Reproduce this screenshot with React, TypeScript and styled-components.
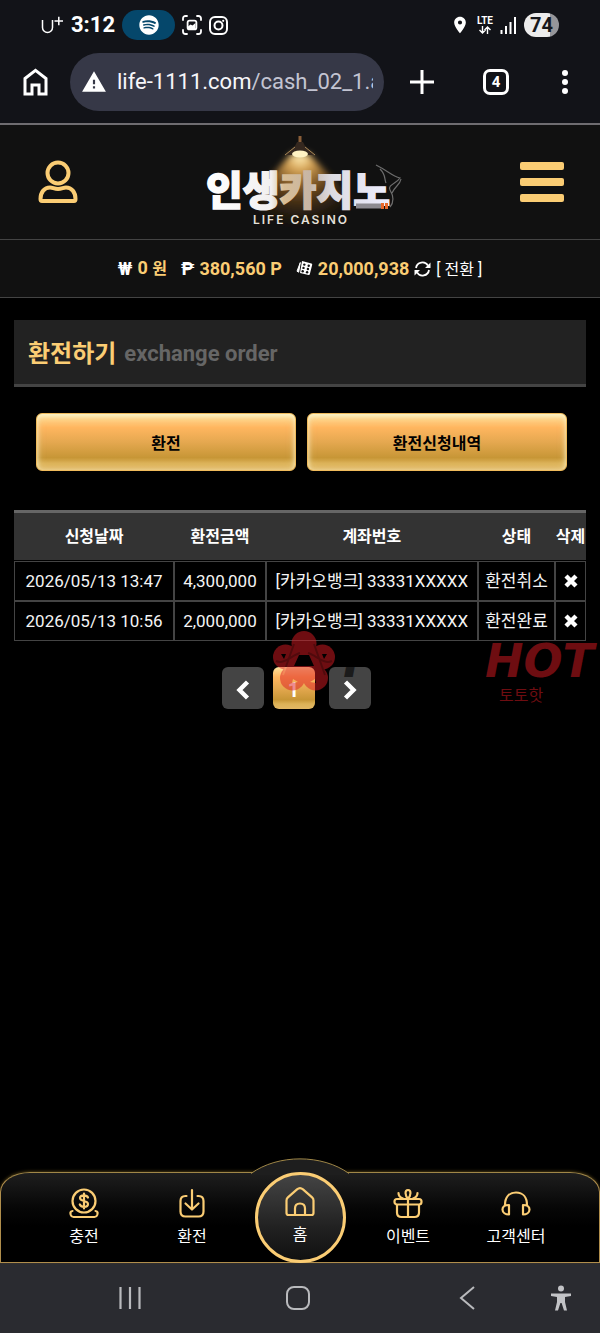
import React from "react";
import styled, { createGlobalStyle } from "styled-components";
import { FaSpotify } from "react-icons/fa";
import { MdLocationOn, MdWarning } from "react-icons/md";

const GOLD = "#fbcd74";

const GlobalStyle = createGlobalStyle`
  *, *::before, *::after { box-sizing: border-box; }
  body {
    margin: 0;
    background: #000;
    color: #fff;
    font-family: Roboto, "Noto Sans CJK KR", sans-serif;
    font-size: 16px;
  }
  button { font: inherit; color: inherit; border: 0; padding: 0; background: none; cursor: pointer; }
  a { color: inherit; text-decoration: none; }
  svg { display: block; flex: none; }
`;

const Screen = styled.div`
  min-height: 100vh;
  display: flex;
  flex-direction: column;
`;

/* ---------- phone status bar and browser toolbar ---------- */

const Chrome = styled.div`
  background: #121318;
  border-bottom: 2px solid #6f6d71;
`;

const StatusBar = styled.div`
  height: 50px;
  padding: 0 41px;
  display: flex;
  align-items: center;
  justify-content: space-between;
`;

const StatusGroup = styled.div<{ $gap: number }>`
  display: flex;
  align-items: center;
  gap: ${(p) => p.$gap}px;
`;

const Clock = styled.span`
  font-size: 22px;
  font-weight: 700;
  line-height: 30px;
`;

const MediaPill = styled.span`
  width: 53px;
  height: 30px;
  border-radius: 15px;
  background: #05476b;
  display: flex;
  align-items: center;
  justify-content: center;
`;

const Network = styled.span`
  display: flex;
  flex-direction: column;
  align-items: center;
  font-size: 10px;
  line-height: 10px;
  font-weight: 700;
`;

const Battery = styled.span`
  width: 35px;
  height: 24px;
  border-radius: 12px;
  background: linear-gradient(90deg, #ececec 74%, #96969a 74%);
  color: #17181c;
  font-size: 20px;
  line-height: 24px;
  font-weight: 700;
  text-align: center;
`;

const BrowserBar = styled.div`
  padding: 3px 28px 12px 23px;
  display: flex;
  align-items: center;
`;

const AddressBar = styled.div`
  flex: 1;
  min-width: 0;
  height: 58px;
  margin: 0 26px 0 22px;
  padding: 0 11px;
  border-radius: 29px;
  background: #363847;
  display: flex;
  align-items: center;
  gap: 10px;
`;

const Url = styled.span`
  flex: 1;
  min-width: 0;
  overflow: hidden;
  white-space: nowrap;
  font-size: 22px;
  line-height: 30px;
  font-weight: 400;
  color: #c3c4d2;
  b { font-weight: 400; color: #f6f6fa; }
`;

const BrowserTools = styled.div`
  display: flex;
  align-items: center;
  gap: 49px;
`;

const TabCount = styled.button`
  width: 26px;
  height: 26px;
  border: 3px solid #fff;
  border-radius: 7px;
  font-size: 15px;
  line-height: 20px;
  font-weight: 700;
`;

/* ---------- site header ---------- */

const Header = styled.header`
  height: 115px;
  padding: 0 36px;
  background: #111;
  border-bottom: 1px solid #444;
  display: grid;
  grid-template-columns: 1fr auto 1fr;
  align-items: center;
`;

const MenuButton = styled.button`
  justify-self: end;
  width: 44px;
  display: flex;
  flex-direction: column;
  gap: 8px;
  span { height: 8px; border-radius: 2px; background: ${GOLD}; }
`;

const Balances = styled.div`
  height: 58px;
  background: #111;
  border-bottom: 1px solid #444;
  display: flex;
  align-items: center;
  justify-content: center;
  gap: 14px;
`;

const Balance = styled.div`
  display: flex;
  align-items: center;
  gap: 5px;
  font-weight: 700;
  line-height: 24px;
`;

const Amount = styled.span`
  color: ${GOLD};
  font-size: 18px;
  font-weight: 700;
  small { font-size: 16px; }
`;

const Currency = styled.span`
  font-size: 18px;
  font-weight: 700;
`;

const Convert = styled.button`
  padding-top: 3px;
  font-size: 16px;
  font-weight: 400;
`;

/* ---------- page content ---------- */

const Main = styled.main`
  flex: 1;
  padding: 22px 14px 0;
`;

const Title = styled.h1`
  margin: 0;
  height: 67px;
  padding: 4px 14px 0;
  background: #222;
  border-bottom: 3px solid #444;
  display: flex;
  align-items: center;
  gap: 8px;
  font-size: 24px;
  line-height: 32px;
  font-weight: 700;
  color: ${GOLD};
  small { font-size: 22px; font-weight: 700; color: #666; }
`;

const Actions = styled.div`
  margin: 26px 0 39px;
  padding: 0 19px 0 22px;
  display: grid;
  grid-template-columns: 1fr 1fr;
  gap: 11px;
`;

const goldFace = `
  background: linear-gradient(#ffeaa8 0%, #ffd488 8%, #ffb65f 24%, #e5a850 50%, #c79636 78%, #dcb257 88%, #e2b865 100%);
`;

const ActionButton = styled.button`
  ${goldFace}
  height: 58px;
  padding-top: 3px;
  border: 1px solid #f0bb5c;
  border-radius: 6px;
  box-shadow: inset 0 2px 5px rgba(255, 250, 215, 0.8), inset 0 0 8px rgba(236, 214, 150, 0.7);
  color: #000;
  font-weight: 700;
  line-height: 24px;
`;

const Orders = styled.table`
  width: 100%;
  border-spacing: 0;
  border-collapse: separate;
  table-layout: fixed;
  text-align: center;
`;

const Col = styled.col<{ $w?: string }>`
  width: ${(p) => p.$w};
`;

const HeadCell = styled.th`
  height: 51px;
  padding: 0;
  background: #333;
  border-top: 3px solid #666;
  border-bottom: 1px solid #000;
  font-size: 16px;
  line-height: 24px;
  white-space: nowrap;
`;

const Cell = styled.td`
  height: 40px;
  padding: 0;
  border: 1px solid #444;
  font-size: 17px;
  line-height: 24px;
  color: #f4f4f4;
  white-space: nowrap;
`;

const DeleteButton = styled.button`
  display: block;
  margin: 0 auto;
`;

const PagerArea = styled.div`
  position: relative;
  padding: 26px 8px 0 0;
`;

const Pager = styled.nav`
  display: flex;
  justify-content: center;
`;

const PageButton = styled.button<{ $current?: boolean }>`
  width: 42px;
  height: 42px;
  border-radius: 6px;
  background: #444;
  ${(p) => p.$current && goldFace}
  ${(p) => p.$current && "margin: 0 14px 0 9px;"}
  display: flex;
  align-items: center;
  justify-content: center;
  padding-top: 4px;
  font-size: 20px;
  font-weight: 700;
`;

/* translucent stamp lying over the table and the pager */
const Stamp = styled.div`
  position: absolute;
  top: -11px;
  right: -8px;
  width: 322px;
  display: flex;
  justify-content: space-between;
  align-items: flex-start;
  pointer-events: none;
  color: rgba(220, 26, 34, 0.5);
`;

const StampMark = styled.div`
  display: flex;
  align-items: flex-start;
`;

const StampWord = styled.div<{ $dark?: boolean }>`
  padding-top: 8px;
  font-family: "DejaVu Sans", sans-serif;
  font-size: 46px;
  line-height: 46px;
  font-style: italic;
  font-weight: 700;
  ${(p) => p.$dark && "color: rgba(0, 0, 0, 0.6);"}
  small {
    display: block;
    padding-left: 14px;
    font-family: "Noto Sans CJK KR", sans-serif;
    font-size: 16px;
    line-height: 20px;
    font-style: normal;
    font-weight: 400;
  }
`;

/* ---------- bottom navigation ---------- */

const BottomNav = styled.nav`
  position: relative;
  height: 91px;
  padding: 0 29px;
  border: 1px solid #b08e4c;
  border-top-color: #a08748;
  border-radius: 30px 30px 0 0 / 20px 20px 0 0;
  background: linear-gradient(#1e1e1e, #060606 40%, #000 60%);
  box-shadow: 0 -1px 3px rgba(190, 150, 50, 0.35);
  display: grid;
  grid-template-columns: repeat(5, 1fr);
`;

const Hump = styled.svg`
  position: absolute;
  left: 50%;
  top: -15px;
  margin-left: -50px;
`;

const NavItem = styled.a<{ $home?: boolean }>`
  position: relative;
  justify-self: center;
  display: flex;
  flex-direction: column;
  align-items: center;
  gap: 5px;
  padding-top: 15px;
  line-height: 24px;
  white-space: nowrap;
  ${(p) =>
    p.$home &&
    `
    width: 91px;
    height: 91px;
    margin-top: -1px;
    padding-top: 11px;
    border: 3px solid ${GOLD};
    border-radius: 50%;
    background: linear-gradient(#444, #222 60%, #111);
  `}
`;

const SystemNav = styled.div`
  height: 70px;
  padding: 0 0 0 46px;
  background: #2a2b30;
  display: grid;
  grid-template-columns: 1fr 1fr 1fr 49px;
  align-items: center;
`;

const SystemButton = styled.button<{ $start?: boolean }>`
  height: 48px;
  display: flex;
  align-items: center;
  justify-content: ${(p) => (p.$start ? "flex-start" : "center")};
`;

/* ---------- drawings ---------- */

const Carrier = () => (
  <svg width="23" height="20" viewBox="0 0 23 20" fill="none" stroke="#fff" strokeWidth="1.5" aria-label="U+">
    <path d="M1.5 5v7.5a5 5 0 0 0 10 0V5M13.500 6h8.500M17.800 1.700v8.500" />
  </svg>
);

const CaptureIcon = () => (
  <svg width="20" height="20" viewBox="0 0 20 20" fill="none" stroke="#fff" strokeWidth="1.800" strokeLinecap="round">
    <path d="M1 5V3.500A2.500 2.500 0 0 1 3.500 1H5M15 1h1.500A2.500 2.500 0 0 1 19 3.500V5M19 15v1.500a2.500 2.500 0 0 1-2.500 2.500H15M5 19H3.500A2.500 2.500 0 0 1 1 16.500V15" />
    <rect x="5.600" y="5.600" width="8.800" height="8.800" rx="2" />
    <path d="M6 14v-2.500l2.500-2 2 1 3-2.500v6z" fill="#fff" stroke="none" />
  </svg>
);

const InstagramIcon = () => (
  <svg width="19" height="19" viewBox="0 0 19 19" fill="none" stroke="#fff" strokeWidth="2">
    <rect x="1" y="1" width="17" height="17" rx="5" />
    <circle cx="9.500" cy="9.500" r="4" />
    <circle cx="14.200" cy="4.800" r="1.100" fill="#fff" stroke="none" />
  </svg>
);

const DataArrows = () => (
  <svg width="14" height="8" viewBox="0 0 14 8" fill="none" stroke="#fff" strokeWidth="1.400">
    <path d="M4.500 0v7M1.500 4l3 3 3-3M9.500 8V1M6.500 4l3-3 3 3" />
  </svg>
);

const SignalIcon = () => (
  <svg width="17" height="17" viewBox="0 0 17 17" stroke="#fff" strokeWidth="2">
    <path d="M1.500 13v4M6 9v8M10.500 5v12" />
    <path d="M15 0v17" />
  </svg>
);

const HomeOutline = () => (
  <svg width="25" height="28" viewBox="0 0 25 28" fill="none" stroke="#fff" strokeWidth="3">
    <path d="M2 10.500 12.500 2.300 23 10.500V26h-7V17H9v9H2z" />
  </svg>
);

const PlusIcon = () => (
  <svg width="24" height="24" viewBox="0 0 24 24" stroke="#fff" strokeWidth="3">
    <path d="M12 0v24M0 12h24" />
  </svg>
);

const DotsIcon = () => (
  <svg width="14" height="26" viewBox="0 0 14 26" fill="#fff">
    <circle cx="7" cy="4" r="3" />
    <circle cx="7" cy="13" r="3" />
    <circle cx="7" cy="22" r="3" />
  </svg>
);

const UserIcon = () => (
  <svg width="44" height="46" viewBox="0 0 44 46" fill="none" stroke={GOLD} strokeWidth="4">
    <circle cx="22" cy="14" r="10.500" />
    <path d="M6 42h32c1.200 0 1.500-1 1.500-2 0-7-4-11.500-9.500-11.500-3 0-4 1.400-8 1.400s-5-1.400-8-1.400C8.500 28.500 4.500 33 4.500 40c0 1 .3 2 1.500 2z" strokeLinejoin="round" />
  </svg>
);

const Logo = () => (
  <svg width="220" height="110" viewBox="0 0 220 110" role="img" aria-label="인생카지노 LIFE CASINO">
    <defs>
      <radialGradient id="glow" cx="110" cy="30" r="72" gradientUnits="userSpaceOnUse">
        <stop offset="0" stopColor="#fff0b8" />
        <stop offset=".18" stopColor="#d8a658" />
        <stop offset=".5" stopColor="#8a5a20" stopOpacity=".7" />
        <stop offset="1" stopColor="#3a240c" stopOpacity="0" />
      </radialGradient>
      <linearGradient id="letters" x1="17" y1="0" x2="200" y2="0" gradientUnits="userSpaceOnUse">
        <stop offset="0" stopColor="#fff" />
        <stop offset=".35" stopColor="#f2f0f0" />
        <stop offset=".42" stopColor="#d8bd94" />
        <stop offset=".56" stopColor="#c7b6a6" />
        <stop offset=".68" stopColor="#dcdbe2" />
        <stop offset="1" stopColor="#eef" />
      </linearGradient>
      <filter id="soft" x="-20%" y="-20%" width="140%" height="140%">
        <feGaussianBlur stdDeviation="3" />
      </filter>
    </defs>
    <path d="M102 26h16l48 50-18 28H72L58 74z" fill="url(#glow)" filter="url(#soft)" />
    <path d="M110 9v7" stroke="#8a5e38" strokeWidth="3" />
    <path d="M107 15h6l2 4 10 9H95l10-9z" fill="#35281f" />
    <path d="M105 20l-10 8M115 20l10 8" stroke="#a98958" strokeWidth="1" />
    <ellipse cx="110" cy="27" rx="8" ry="3.500" fill="#fff3c4" />
    <text x="16" y="78" fontFamily="Noto Sans CJK KR, sans-serif" fontSize="40" fontWeight="900" fill="url(#letters)" stroke="url(#letters)" strokeWidth="1.500">
      인생카지노
    </text>
    <path d="M166 79h26" stroke="#8d8b91" strokeWidth="5" />
    <path d="M191 79h7" stroke="#e9682b" strokeWidth="6" strokeDasharray="3 1" />
    <path d="M200 80c5-6 3-12 0-17s7-7 10-12c-8-2-12-7-24-13M202 66c3-7 8-8 9-14M196 56c-2-5 0-8-6-14" fill="none" stroke="#aaa" strokeOpacity=".6" strokeWidth="1.200" />
    <text x="111" y="97" textAnchor="middle" fontFamily="Inter, sans-serif" fontSize="12" fontWeight="600" letterSpacing="2" fill="#e6e1da">
      LIFE CASINO
    </text>
  </svg>
);

const DiceIcon = () => (
  <svg width="17" height="17" viewBox="0 0 17 17">
    <path d="M6 1 15.500 3.500a1 1 0 0 1 .7 1.200l-2.400 9.600a1 1 0 0 1-1.200.7L4 13z" fill="#fff" />
    <path d="M4.300 2.500 1 11.200l1.700 1z" fill="#fff" stroke="#fff" strokeLinejoin="round" />
    <g fill="#111">
      <circle cx="8.300" cy="4.600" r="1.200" />
      <circle cx="12.700" cy="5.700" r="1.200" />
      <circle cx="7.500" cy="7.900" r="1.200" />
      <circle cx="11.900" cy="9" r="1.200" />
      <circle cx="6.700" cy="11.200" r="1.200" />
      <circle cx="11.100" cy="12.300" r="1.200" />
    </g>
  </svg>
);

const SwapIcon = () => (
  <svg width="17" height="16" viewBox="0 0 17 16" fill="none" stroke="#fff" strokeWidth="1.800">
    <path d="M2 7A6.500 6.500 0 0 1 14 4.600M15 9A6.500 6.500 0 0 1 3 11.400" />
    <path d="M16.500 1.500V7H11zM.5 14.500V9H6z" fill="#fff" stroke="none" />
  </svg>
);

const CrossIcon = () => (
  <svg width="14" height="14" viewBox="0 0 14 14" stroke="#fff" strokeWidth="4.400">
    <path d="M2 2l10 10M12 2 2 12" />
  </svg>
);

const Chevron = ({ right }: { right?: boolean }) => (
  <svg width="14" height="20" viewBox="0 0 14 20" fill="none" stroke="#fff" strokeWidth="4.400">
    <path d={right ? "M2.500 2 10.500 10l-8 8" : "M11.500 2 3.500 10l8 8"} />
  </svg>
);

const FlowerMark = () => (
  <svg width="64" height="64" viewBox="0 0 64 64">
    <mask id="petals">
      <g fill="#fff">
        <circle cx="32" cy="13.500" r="12.500" />
        <circle cx="50.500" cy="27" r="12.500" />
        <circle cx="43.500" cy="48" r="12.500" />
        <circle cx="20.500" cy="48" r="12.500" />
        <circle cx="13.500" cy="27" r="12.500" />
        <path d="M32 12 52 27 44 50H20L12 27z" />
      </g>
      <path d="M27 25h10l5 11H22zM9 24l5 0-2 5zM55 24l-5 0 2 5zM21 49l5 3-6 1zM43 49l-5 3 6 1z" fill="#000" />
      <path d="M22 14 11 45M42 14l11 31M4 31c8 4 16-6 24-8M60 31c-8 4-16-6-24-8" fill="none" stroke="#bbb" strokeWidth="2" />
    </mask>
    <rect width="64" height="64" fill="currentColor" mask="url(#petals)" />
  </svg>
);

const navSvg = {
  width: 30,
  height: 32,
  viewBox: "0 0 30 32",
  fill: "none",
  stroke: GOLD,
  strokeWidth: 2.2,
  strokeLinecap: "round" as const,
  strokeLinejoin: "round" as const,
};

const DepositIcon = () => (
  <svg {...navSvg}>
    <circle cx="15" cy="13" r="11.500" />
    <path d="M19 9.500c-.7-1.600-2-2.200-4-2.200-2.300 0-4 1-4 2.800 0 4 8 1.700 8 5.800 0 1.800-1.700 2.900-4 2.900-2 0-3.500-.7-4.200-2.300M15 5.500v15" />
    <path d="M3.500 23C1 23.300 1.200 25 1.800 27c.5 1.500 1.200 2 2.700 2h21c1.500 0 2.200-.5 2.700-2 .6-2 .8-3.700-1.700-4" />
  </svg>
);

const WithdrawIcon = () => (
  <svg {...navSvg}>
    <path d="M9.500 8H8.500C5 8 3.500 9.500 3.500 13v10.500c0 3.500 1.500 5 5 5h13c3.500 0 5-1.500 5-5V13c0-3.500-1.500-5-5-5h-1M15 2v19M8.500 15.500 15 21.500l6.500-6" />
  </svg>
);

const HomeIcon = () => (
  <svg {...navSvg}>
    <path d="M1.500 14.500c0-1.200.4-2.200 1.400-3.100L12 3.400c2-1.700 4-1.700 6 0l9.100 8c1 .9 1.400 1.900 1.400 3.100V27c0 1.300-.7 2-2 2h-23c-1.300 0-2-.7-2-2zM10 29v-6.500c0-3 2-5 5-5s5 2 5 5V29" />
  </svg>
);

const GiftIcon = () => (
  <svg {...navSvg}>
    <rect x="1.500" y="11" width="27" height="5.500" rx="2.500" />
    <path d="M4 17v7.500c0 3 1.500 4.500 4.500 4.500h13c3 0 4.500-1.500 4.500-4.500V17M15 11v18M15 10.500c-3-2.500-3.500-8.500 0-8.500s3 6 0 8.500zM5.500 5c0 3 1.500 4.500 4.500 5.500M24.500 5c0 3-1.500 4.500-4.500 5.500" />
  </svg>
);

const HeadsetIcon = () => (
  <svg {...navSvg}>
    <path d="M4 17c0-7.500 4-12.500 11-12.500S26 9.500 26 17" />
    <path d="M8 17v9.500c-3.500 0-6.500-2-6.500-5S4 17 8 17zM22 17v9.500c3.500 0 6.500-2 6.500-5S26 17 22 17z" />
  </svg>
);

const RecentsIcon = () => (
  <svg width="22" height="24" viewBox="0 0 22 24" stroke="#b9babd" strokeWidth="2.200">
    <path d="M1.500 1v22M11 1v22M20.500 1v22" />
  </svg>
);

const SquareIcon = () => (
  <svg width="24" height="24" viewBox="0 0 24 24" fill="none" stroke="#b9babd" strokeWidth="2">
    <rect x="1" y="1" width="22" height="22" rx="7" />
  </svg>
);

const BackIcon = () => (
  <svg width="16" height="24" viewBox="0 0 16 24" fill="none" stroke="#b9babd" strokeWidth="2">
    <path d="M15 1 2 12l13 11" />
  </svg>
);

const PersonIcon = () => (
  <svg width="20" height="26" viewBox="0 0 20 26" fill="#c2c3c6">
    <circle cx="10" cy="3.500" r="3" />
    <path d="M0 8.500h20V11l-6 1v5l2 8.500h-3L10.600 18H9.400L7 25.500H4L6 17v-5L0 11z" />
  </svg>
);

/* ---------- data ---------- */

const orders = [
  { date: "2026/05/13 13:47", amount: "4,300,000", account: "[카카오뱅크] 33331XXXXX", state: "환전취소" },
  { date: "2026/05/13 10:56", amount: "2,000,000", account: "[카카오뱅크] 33331XXXXX", state: "환전완료" },
];

const navItems = [
  { label: "충전", Icon: DepositIcon },
  { label: "환전", Icon: WithdrawIcon },
  { label: "홈", Icon: HomeIcon, home: true },
  { label: "이벤트", Icon: GiftIcon },
  { label: "고객센터", Icon: HeadsetIcon },
];

export default function App() {
  return (
    <Screen>
      <GlobalStyle />
      <Chrome>
        <StatusBar>
          <StatusGroup $gap={7}>
            <Carrier />
            <Clock>3:12</Clock>
            <MediaPill>
              <FaSpotify size={20} />
            </MediaPill>
            <CaptureIcon />
            <InstagramIcon />
          </StatusGroup>
          <StatusGroup $gap={7}>
            <MdLocationOn size={20} />
            <Network>
              LTE
              <DataArrows />
            </Network>
            <SignalIcon />
            <Battery>74</Battery>
          </StatusGroup>
        </StatusBar>
        <BrowserBar>
          <button aria-label="홈">
            <HomeOutline />
          </button>
          <AddressBar>
            <MdWarning size={26} />
            <Url>
              <b>life-1111.com</b>/cash_02_1.a
            </Url>
          </AddressBar>
          <BrowserTools>
            <button aria-label="새 탭">
              <PlusIcon />
            </button>
            <TabCount>4</TabCount>
            <button aria-label="메뉴">
              <DotsIcon />
            </button>
          </BrowserTools>
        </BrowserBar>
      </Chrome>

      <Header>
        <a href="#user" aria-label="내 정보">
          <UserIcon />
        </a>
        <a href="#main">
          <Logo />
        </a>
        <MenuButton aria-label="전체 메뉴">
          <span />
          <span />
          <span />
        </MenuButton>
      </Header>

      <Balances>
        <Balance>
          <Currency>₩</Currency>
          <Amount>
            0 <small>원</small>
          </Amount>
        </Balance>
        <Balance>
          <Currency>₱</Currency>
          <Amount>380,560 P</Amount>
        </Balance>
        <Balance>
          <DiceIcon />
          <Amount>20,000,938</Amount>
          <SwapIcon />
          <Convert>[ 전환 ]</Convert>
        </Balance>
      </Balances>

      <Main>
        <Title>
          환전하기 <small>exchange order</small>
        </Title>
        <Actions>
          <ActionButton>환전</ActionButton>
          <ActionButton>환전신청내역</ActionButton>
        </Actions>
        <Orders>
          <colgroup>
            <Col $w="28%" />
            <Col $w="16%" />
            <Col />
            <Col $w="77px" />
            <Col $w="31px" />
          </colgroup>
          <thead>
            <tr>
              <HeadCell>신청날짜</HeadCell>
              <HeadCell>환전금액</HeadCell>
              <HeadCell>계좌번호</HeadCell>
              <HeadCell>상태</HeadCell>
              <HeadCell>삭제</HeadCell>
            </tr>
          </thead>
          <tbody>
            {orders.map((o) => (
              <tr key={o.date}>
                <Cell>{o.date}</Cell>
                <Cell>{o.amount}</Cell>
                <Cell>{o.account}</Cell>
                <Cell>{o.state}</Cell>
                <Cell>
                  <DeleteButton aria-label="삭제">
                    <CrossIcon />
                  </DeleteButton>
                </Cell>
              </tr>
            ))}
          </tbody>
        </Orders>
        <PagerArea>
          <Pager>
            <PageButton aria-label="이전">
              <Chevron />
            </PageButton>
            <PageButton $current>1</PageButton>
            <PageButton aria-label="다음">
              <Chevron right />
            </PageButton>
          </Pager>
          <Stamp>
            <StampMark>
              <FlowerMark />
              <StampWord $dark>T</StampWord>
            </StampMark>
            <StampWord>
              HOT
              <small>토토핫</small>
            </StampWord>
          </Stamp>
        </PagerArea>
      </Main>

      <BottomNav>
        <Hump width="100" height="17" viewBox="0 0 100 17">
          <path d="M1 17V15.500C28-4 72-4 99 15.500V17z" fill="#1e1e1e" />
          <path d="M1 15.500C28-4 72-4 99 15.500" fill="none" stroke="#a08748" />
        </Hump>
        {navItems.map(({ label, Icon, home }) => (
          <NavItem key={label} href={`#${label}`} $home={home}>
            <Icon />
            {label}
          </NavItem>
        ))}
      </BottomNav>
      <SystemNav>
        <SystemButton aria-label="최근 앱">
          <RecentsIcon />
        </SystemButton>
        <SystemButton aria-label="홈 화면">
          <SquareIcon />
        </SystemButton>
        <SystemButton aria-label="뒤로">
          <BackIcon />
        </SystemButton>
        <SystemButton $start aria-label="접근성">
          <PersonIcon />
        </SystemButton>
      </SystemNav>
    </Screen>
  );
}
